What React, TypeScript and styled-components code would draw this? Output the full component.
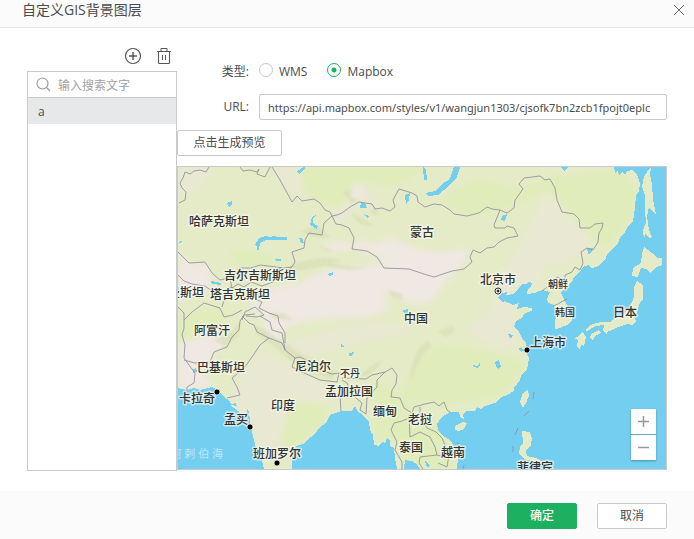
import React, { useState } from "react";
import styled, { createGlobalStyle, css } from "styled-components";

const GlobalStyle = createGlobalStyle`
  * { box-sizing: border-box; }
  body {
    margin: 0;
    background: #fff;
    color: #4c4c4c;
    font: 12px/16px "Open Sans", "Noto Sans CJK SC", sans-serif;
  }
  button, input { font: inherit; color: inherit; }
`;

const Dialog = styled.section`
  display: flex;
  flex-direction: column;
  min-height: 100vh;
`;

const Header = styled.header`
  display: flex;
  align-items: flex-start;
  justify-content: space-between;
  height: 28px;
  padding: 0 8px 0 22px;
  background: #fbfbfb;
  border-bottom: 1px solid #e6e6e6;
`;

const Title = styled.h1`
  margin: 0;
  font-size: 14px;
  line-height: 20px;
  font-weight: 400;
`;

const IconButton = styled.button`
  display: flex;
  padding: 0;
  border: 0;
  background: none;
  cursor: pointer;
`;

const CloseButton = styled(IconButton)`
  padding: 4px 0;
`;

const Body = styled.main`
  flex: 1;
  display: grid;
  grid-template-columns: 150px minmax(0, 1fr);
  padding: 19px 27px;
`;

const Sidebar = styled.aside`
  display: flex;
  flex-direction: column;
`;

const Tools = styled.div`
  display: flex;
  justify-content: flex-end;
  gap: 14px;
  height: 24px;
  padding-right: 5px;
`;

const ListBox = styled.div`
  height: 400px;
  border: 1px solid #c8cacc;
`;

const Search = styled.label`
  display: flex;
  align-items: center;
  gap: 7px;
  height: 26px;
  padding-left: 8px;
  border-bottom: 1px solid #c8cacc;
`;

const SearchInput = styled.input`
  flex: 1;
  min-width: 0;
  height: 24px;
  padding: 2px 0 0;
  border: 0;
  outline: 0;
  background: none;
  &::placeholder { color: #a0a2a4; opacity: 1; }
`;

const Items = styled.ul`
  margin: 0;
  padding: 0;
  list-style: none;
`;

const Item = styled.button`
  display: block;
  width: 100%;
  height: 26px;
  padding: 2px 10px 0;
  border: 0;
  background: #e7e8ea;
  text-align: left;
`;

const Panel = styled.div`
  display: flex;
  flex-direction: column;
  align-items: stretch;
  gap: 10px;
  padding-top: 13px;
`;

const Field = styled.div`
  display: grid;
  grid-template-columns: 72px minmax(0, 1fr);
  column-gap: 10px;
  align-items: center;
  min-height: 24px;
`;

const FieldLabel = styled.label`
  text-align: right;
`;

const Options = styled.div`
  display: flex;
  align-items: center;
  gap: 20px;
`;

const Option = styled.label`
  display: flex;
  align-items: center;
  gap: 6px;
`;

const Radio = styled.input`
  appearance: none;
  width: 14px;
  height: 14px;
  margin: 0 0 4px;
  border: 1px solid #c4c6c8;
  border-radius: 50%;
  background: #fff;
  &:checked {
    border-color: #1db060;
    background: radial-gradient(circle, #1db060 2px, #fff 3px);
  }
`;

const UrlInput = styled.input`
  width: 100%;
  height: 26px;
  padding: 0 8px;
  border: 1px solid #c8cacc;
  border-radius: 2px;
  outline: 0;
  background: #fff;
  font-family: "Noto Sans", "Noto Sans CJK SC", sans-serif;
  font-size: 11px;
`;

const Button = styled.button<{ $primary?: boolean; $wide?: boolean }>`
  width: ${(p) => (p.$wide ? "105px" : "70px")};
  height: 26px;
  padding: 0;
  border: 1px solid #c8cacc;
  border-radius: 2px;
  background: #fff;
  cursor: pointer;
  ${(p) =>
    p.$primary &&
    css`
      border-color: #1db060;
      background: #1db060;
      color: #fff;
      font-weight: 500;
    `}
`;

const MapFrame = styled.div`
  position: relative;
  height: 304px;
  overflow: hidden;
  border: 1px solid #c8cacc;
  background: #73cef0;
`;

const MapDrawing = styled.svg`
  display: block;
  width: 100%;
  height: 100%;
`;

const ZoomControls = styled.div`
  position: absolute;
  right: 10px;
  bottom: 9px;
  display: grid;
  gap: 1px;
  background: #5fb0cf;
  box-shadow: 0 1px 2px rgba(0, 0, 0, 0.3);
`;

const ZoomButton = styled(IconButton)`
  align-items: center;
  justify-content: center;
  width: 25px;
  height: 25px;
  background: #fff;
`;

const Footer = styled.footer`
  display: flex;
  justify-content: flex-end;
  gap: 20px;
  height: 48px;
  padding: 12px 27px 0;
  background: #fbfbfb;
`;

const LAND = [
  "M178 167H614L615 173L618 171L619 176L622 172L625 175L627 171L632 170L637 174L640 183L639 191L636 196L635 207L633 222L628 226L625 232L621 236L618 243L612 250L608 253L605 260L598 266L592 268L588 265L583 267L580 272L574 277L572 282L565 288L561 293L563 297L567 305L571 312L572 320L567 325L560 328L555 329L555 320L557 315L554 305L548 303L547 299L550 292L542 290L535 293L527 294L528 289L531 287L532 283L529 282L526 284L522 284L518 289L513 294L507 295L504 297L505 302L509 303L513 305L519 303L517 309L524 307L532 308L532 311L525 313L522 318L516 321L514 327L519 332L522 338L526 343L527 348L520 350L526 352L529 358L527 370L522 374L520 380L514 388L514 391L507 395L500 398L497 402L489 405L484 406L481 409L477 407L475 411L467 411L463 414L464 419L461 418L459 412L450 412L442 417L437 424L438 430L442 435L448 439L452 443L456 450L458 458L457 469H420L417 464L412 461L405 460L404 469H397L395 458L394 448L390 446L390 440L387 438L385 443L382 442L379 446L374 445L373 435L370 430L369 422L364 417L362 414L358 412L355 406L352 411H341L338 412L330 415L326 423L320 427L314 435L307 440L303 444L296 446L292 452V469H264L262 461L257 452L254 440L251 428L249 412L247 408L246 416L242 415L238 411L230 405L237 406L236 403L231 404L229 400L225 398L222 395L219 390L212 387L200 390L194 388L187 390L178 388Z",
  "M648 170L651 168L650 175L652 184L653 199L656 215L652 211L649 207L647 216L649 230L652 237L649 238L645 234L644 240L643 230L646 223L645 210L645 195L642 187L644 177Z",
  "M644 247L652 253L657 258L662 258L662 265L656 267L651 273L646 269L641 268L638 277L632 276L633 268L641 263L642 254Z",
  "M637 281L643 285L643 299L640 302L637 312L635 317L636 322L632 325L627 324L618 327L612 330L606 332L610 323L614 318L622 315L630 307L634 297L634 287Z",
  "M585 330L590 325L601 322L610 322L613 325L608 329L607 334L603 331L604 325L596 326L587 331Z",
  "M577 337L583 332L586 337L584 346L581 345L580 350L577 346L578 340L574 338Z",
  "M591 334L599 330L601 333L595 336L593 340L590 338Z",
  "M528 390L529 396L526 403L523 408L520 402L523 393Z",
  "M522 431L530 432L532 438L531 445L526 451L527 456L536 458L543 462L541 465L532 461L524 459L519 454L520 446L523 443Z",
  "M455 426L463 422L467 423L464 429L459 431L455 430Z",
];

const LAKES = [
  "M255 245L259 238L265 236L270 237L274 236L277 237H287V240H272L266 240L260 243L259 250L257 250V247Z",
  "M311 222L312 217L316 215L313 219V223L318 226L317 229L310 225Z",
  "M227 203L232 201V204L229 207Z",
  "M299 238L302 238L304 243L301 243Z",
  "M274 259H281V261H276ZM272 270L281 267V270L276 272ZM211 281L221 283V285L212 284ZM178 242L182 241L180 244Z",
  "M423 167L426 170L427 180L424 180ZM454 167H460L457 177L450 184L444 190L438 195L428 196L426 193L435 191L442 184L450 179Z",
  "M405 195L410 193L409 200L406 205ZM361 202L365 203L367 208L360 208ZM364 214L369 216L367 218Z",
  "M403 310L408 309V314L404 314ZM328 274L333 272V275L329 276ZM502 216L507 214L505 221L501 220Z",
  "M587 248L593 248L591 253L588 254ZM561 167H569L564 171ZM498 297L502 293L507 292L505 301L502 302Z",
  "M472 365L478 366L480 362V366L477 368ZM495 362L499 360L501 367L498 369L496 366ZM341 344L345 347H341ZM349 353L354 352L352 356L349 356Z",
  "M193 369L196 368L197 372L193 373ZM508 334L513 335L511 339ZM518 349L522 347V352ZM297 171L304 167L305 168L299 174ZM425 461L431 466L427 467Z",
];

const DESERTS = [
  "M330 268L387 263L384 268L434 277L457 270L443 287L430 303L412 304L383 293L388 310L370 317L310 320L290 326L283 330L280 347L266 335L263 320L263 300L273 287L300 282Z",
  "M320 244L335 241L352 243L353 248L378 257L384 268L434 277L458 270L469 256L465 248L440 252L415 248L392 238L375 243L358 240L350 250L330 252Z",
  "M178 250L190 263L210 265L212 290L195 292L178 302Z",
  "M178 342L188 340L200 336L225 336L228 346L214 352L210 362L200 370L215 388L178 390Z",
  "M352 184L363 186L362 196L350 198ZM252 300L262 300L266 312L250 313Z",
];

const BEIGE = [
  "M463 330L490 310L500 270L530 250L545 280L515 300L520 345L500 350L480 340Z",
  "M260 350L300 370L340 390L330 410L300 440L265 460L230 400L242 370Z",
  "M535 215L548 192L560 205L574 225L600 228L590 250L570 262L545 268L520 272L508 262Z",
  "M178 167H215L200 190L178 195Z",
  "M340 192L360 185L375 195L382 208L355 206L350 220L330 225ZM268 167L300 167L310 198L295 198Z",
  "M275 345L330 330L380 322L420 325L400 335L350 345L310 358Z",
];

const GREENS = [
  "M300 167H425L400 185L360 182L340 208L305 195Z",
  "M440 200L475 180L520 190L550 178L620 170L635 190L630 220L600 250L585 230L550 190L500 210L470 215Z",
  "M420 360L440 345L500 355L526 365L500 395L440 405L400 395Z",
  "M225 250L255 252L290 262L240 265Z",
  "M178 320L202 312L225 310L225 325L190 345L178 340Z",
  "M375 380L405 400L430 420L455 445L450 469H405L395 440L375 440Z",
  "M292 400L330 405L320 425L290 448L280 440Z",
];

const RELIEF = [
  "M280 270L300 262L325 258L343 260L330 262L345 266L368 268L350 270L325 266L300 270L285 274Z",
  "M300 232L318 226L330 238L312 236ZM320 246L336 252L325 251ZM350 212L364 220L376 226L360 224Z",
  "M253 325L264 329L276 338L288 344L300 354L323 364L335 372L332 379L310 373L294 363L274 346L258 335Z",
  "M360 376L370 367L382 360L378 367L368 375Z",
  "M415 357L420 347L428 341L431 346L424 354L417 365L412 379L410 374Z",
  "M343 192L352 189L350 197L360 200L351 203ZM370 212L376 207L379 216ZM268 312L285 314L293 320L275 319Z",
  "M438 331L453 326L455 331L445 337ZM388 290L400 293L404 300L392 298ZM214 340L231 333L240 322L238 336L225 347Z",
];

const BORDERS = [
  "M209 167L206 172L200 170L194 171L190 174L185 172L183 178L180 183L182 188L186 192L185 200L179 203",
  "M240 167L243 171L250 170L257 172L259 169L257 174L265 177L270 167M272 167L280 180L292 202L297 196L302 201L314 199L320 203L325 210L330 212L332 216L337 215L342 213L350 207L359 202L372 204L375 209L382 208L390 211L395 207L393 200L399 189L412 193L417 196L418 202L425 207L434 204L442 205L450 210L454 214L467 216L479 213L487 207L492 209L500 210L507 213L514 208L515 200L523 189L519 184L524 178L540 176L545 180L550 179L555 188L557 200L562 212L574 214L579 219L580 228L590 228L595 224L603 223L602 228L599 233L598 242L593 250L587 248L581 252L583 263L580 270L575 267L572 272L565 275V280L557 277L550 285L542 291",
  "M500 210L494 225L495 228L505 228L507 226L514 228L518 236L507 238L499 242L494 247L487 248L480 253L473 250L470 257L472 262L464 269L452 271L434 277L424 274L409 269L384 268L377 257L367 251L352 249L354 238L349 228L342 225L336 224L332 216L324 223L322 235L309 233L305 240L304 248L292 252L295 262L292 267L284 268L260 265L251 268L240 268L232 277L220 280L212 273L205 262L189 263L178 252",
  "M553 306L558 304L561 302L567 299",
  "M230 279L232 288L238 284L244 287L251 282L262 286L273 282L282 275L292 267M222 307L226 294L230 287L241 291L254 290L255 299L262 302L259 308L269 313L278 316L279 323L285 333V343M242 320L245 312L255 307L264 315L257 317L246 316",
  "M178 275L184 281L192 284L205 286L212 291L220 288M178 307L184 313L184 328L182 335L185 345L184 358L189 365L195 373L194 383L187 387V390M184 320L192 312L204 303L220 308L224 317L233 315L242 310",
  "M184 360L195 363L210 362L214 352L227 347L232 337L239 330L240 321L244 315L255 314M227 398L240 395L237 387L232 378L244 368L252 357L260 345L269 338L257 332L254 325L249 323L242 316",
  "M260 316L270 322L272 330L282 333L285 350L295 358L292 367L304 373L320 380L337 382L339 373L332 374L320 370L310 362L300 357L295 358M269 338L282 343L285 350",
  "M342 378L366 379L372 375L385 372L392 368L397 375L396 384L392 390L391 397L400 398L404 408L412 413L414 407L425 404L434 402L439 406L444 402L447 410L450 412M385 372L377 380V387L367 398L366 414L360 410L362 403L356 398L350 391L347 383L342 380M341 411L340 395L345 390",
  "M409 418L402 421L394 423L391 430L397 442L395 450L402 462V469M409 414L410 437L420 432L430 437L435 447L437 455L420 457L419 463L423 469M420 407L420 416L427 428L436 432L442 438L449 455L447 467L438 463M437 455L447 458",
  "M534 392L533 399M529 411L524 416M518 428L515 435M513 446V452M457 442L460 447M464 465L463 469",
];

type PlaceLabel = [string, number, number, number?];

const PLACES: PlaceLabel[] = [
  ["哈萨克斯坦", 219, 226],
  ["吉尔吉斯斯坦", 260, 280],
  ["土库曼斯坦", 174, 297],
  ["塔吉克斯坦", 240, 299],
  ["阿富汗", 212, 335],
  ["巴基斯坦", 221, 372],
  ["尼泊尔", 313, 371],
  ["不丹", 350, 377, 10],
  ["孟加拉国", 349, 396],
  ["印度", 283, 410],
  ["卡拉奇", 197, 403],
  ["孟买", 236, 424],
  ["班加罗尔", 277, 458],
  ["缅甸", 385, 416],
  ["老挝", 420, 424],
  ["泰国", 411, 452],
  ["越南", 453, 457],
  ["菲律宾", 535, 472],
  ["上海市", 548, 347],
  ["韩国", 565, 316, 10],
  ["朝鲜", 558, 288, 10],
  ["日本", 625, 317],
  ["北京市", 498, 284],
  ["蒙古", 422, 237],
  ["中国", 416, 323],
];

const CITIES = [
  [217, 392],
  [250, 427],
  [277, 463],
  [527, 350],
];

function AsiaMap() {
  return (
    <MapDrawing viewBox="178 167 488 302" preserveAspectRatio="xMidYMid slice" role="img" aria-label="Mapbox">
      <defs>
        <clipPath id="land">
          {LAND.map((d) => <path key={d} d={d} />)}
        </clipPath>
        <filter id="soft"><feGaussianBlur stdDeviation="3" /></filter>
        <filter id="fine"><feGaussianBlur stdDeviation="1" /></filter>
      </defs>
      <g fill="#e4ebc6" shapeRendering="crispEdges">
        {LAND.map((d) => <path key={d} d={d} />)}
      </g>
      <g clipPath="url(#land)">
        <g filter="url(#soft)">
          <path fill="#e9e8d2" d={BEIGE.join("")} />
          <path fill="#e0ecb9" d={GREENS.join("")} />
          <path fill="#f0e8e2" d={DESERTS.join("")} />
        </g>
        <path fill="#d3daac" opacity="0.5" filter="url(#fine)" d={RELIEF.join("")} />
      </g>
      <path fill="#73cef0" shapeRendering="crispEdges" d={LAKES.join("")} />
      <path fill="none" stroke="#8f909c" strokeOpacity="0.85" strokeLinejoin="round" d={BORDERS.join("")} />
      <text x="223" y="458" textAnchor="end" fontSize="11" fill="#bfe7f8">阿 剌 伯 海</text>
      <g
        fill="#333"
        stroke="#f7f8ee"
        strokeOpacity="0.7"
        strokeWidth="3"
        strokeLinejoin="round"
        paintOrder="stroke"
        textAnchor="middle"
        fontWeight="500"
      >
        {PLACES.map(([name, x, y, size = 12]) => (
          <text key={name} x={x} y={y} fontSize={size}>{name}</text>
        ))}
      </g>
      {CITIES.map(([x, y]) => (
        <circle key={x} cx={x} cy={y} r="3" fill="#000" stroke="#fff" strokeOpacity="0.7" />
      ))}
      <circle cx="498" cy="291" r="3" fill="#fff" stroke="#333" />
      <circle cx="498" cy="291" r="1" fill="#222" stroke="#222" />
    </MapDrawing>
  );
}

export default function App() {
  const [type, setType] = useState("mapbox");
  const [url, setUrl] = useState(
    "https://api.mapbox.com/styles/v1/wangjun1303/cjsofk7bn2zcb1fpojt0eplc"
  );

  return (
    <>
      <GlobalStyle />
      <Dialog role="dialog" aria-labelledby="dialog-title">
        <Header>
          <Title id="dialog-title">自定义GIS背景图层</Title>
          <CloseButton aria-label="关闭">
            <svg width="14" height="12" viewBox="0 0 14 12" fill="none" stroke="#707070">
              <path d="M2 1L12 11M12 1L2 11" />
            </svg>
          </CloseButton>
        </Header>

        <Body>
          <Sidebar>
            <Tools>
              <IconButton aria-label="添加">
                <svg width="18" height="18" viewBox="0 0 18 18" fill="none" stroke="#555">
                  <circle cx="9" cy="9" r="7.5" strokeWidth="1.2" />
                  <path d="M9 5V13M5 9H13" strokeWidth="1.4" />
                </svg>
              </IconButton>
              <IconButton aria-label="删除">
                <svg width="16" height="18" viewBox="0 0 16 18" fill="none" stroke="#555">
                  <path d="M1 4.5H15M5 4.5V1.5H11V4.5M2.5 4.5V16.5H13.5V4.5M6.5 8V13M9.5 8V13" />
                </svg>
              </IconButton>
            </Tools>
            <ListBox>
              <Search>
                <svg width="15" height="15" viewBox="0 0 15 15" fill="none" stroke="#96999c" strokeWidth="1.1">
                  <circle cx="6.5" cy="6.5" r="5.5" />
                  <path d="M10.5 10.5L14 14" />
                </svg>
                <SearchInput aria-label="输入搜索文字" placeholder="输入搜索文字" />
              </Search>
              <Items>
                <li><Item>a</Item></li>
              </Items>
            </ListBox>
          </Sidebar>

          <Panel>
            <Field role="radiogroup" aria-labelledby="type-label">
              <FieldLabel as="span" id="type-label">类型:</FieldLabel>
              <Options>
                <Option>
                  <Radio type="radio" name="type" checked={type === "wms"} onChange={() => setType("wms")} />
                  WMS
                </Option>
                <Option>
                  <Radio type="radio" name="type" checked={type === "mapbox"} onChange={() => setType("mapbox")} />
                  Mapbox
                </Option>
              </Options>
            </Field>
            <Field>
              <FieldLabel htmlFor="url">URL:</FieldLabel>
              <UrlInput id="url" value={url} onChange={(e) => setUrl(e.target.value)} />
            </Field>
            <Button $wide>点击生成预览</Button>
            <MapFrame>
              <AsiaMap />
              <ZoomControls>
                <ZoomButton aria-label="放大">
                  <svg width="11" height="11" viewBox="0 0 11 11" stroke="#999" strokeWidth="1.5">
                    <path d="M5.5 0V11M0 5.5H11" />
                  </svg>
                </ZoomButton>
                <ZoomButton aria-label="缩小">
                  <svg width="11" height="11" viewBox="0 0 11 11" stroke="#999" strokeWidth="1.5">
                    <path d="M0 5.5H11" />
                  </svg>
                </ZoomButton>
              </ZoomControls>
            </MapFrame>
          </Panel>
        </Body>

        <Footer>
          <Button $primary>确定</Button>
          <Button>取消</Button>
        </Footer>
      </Dialog>
    </>
  );
}
